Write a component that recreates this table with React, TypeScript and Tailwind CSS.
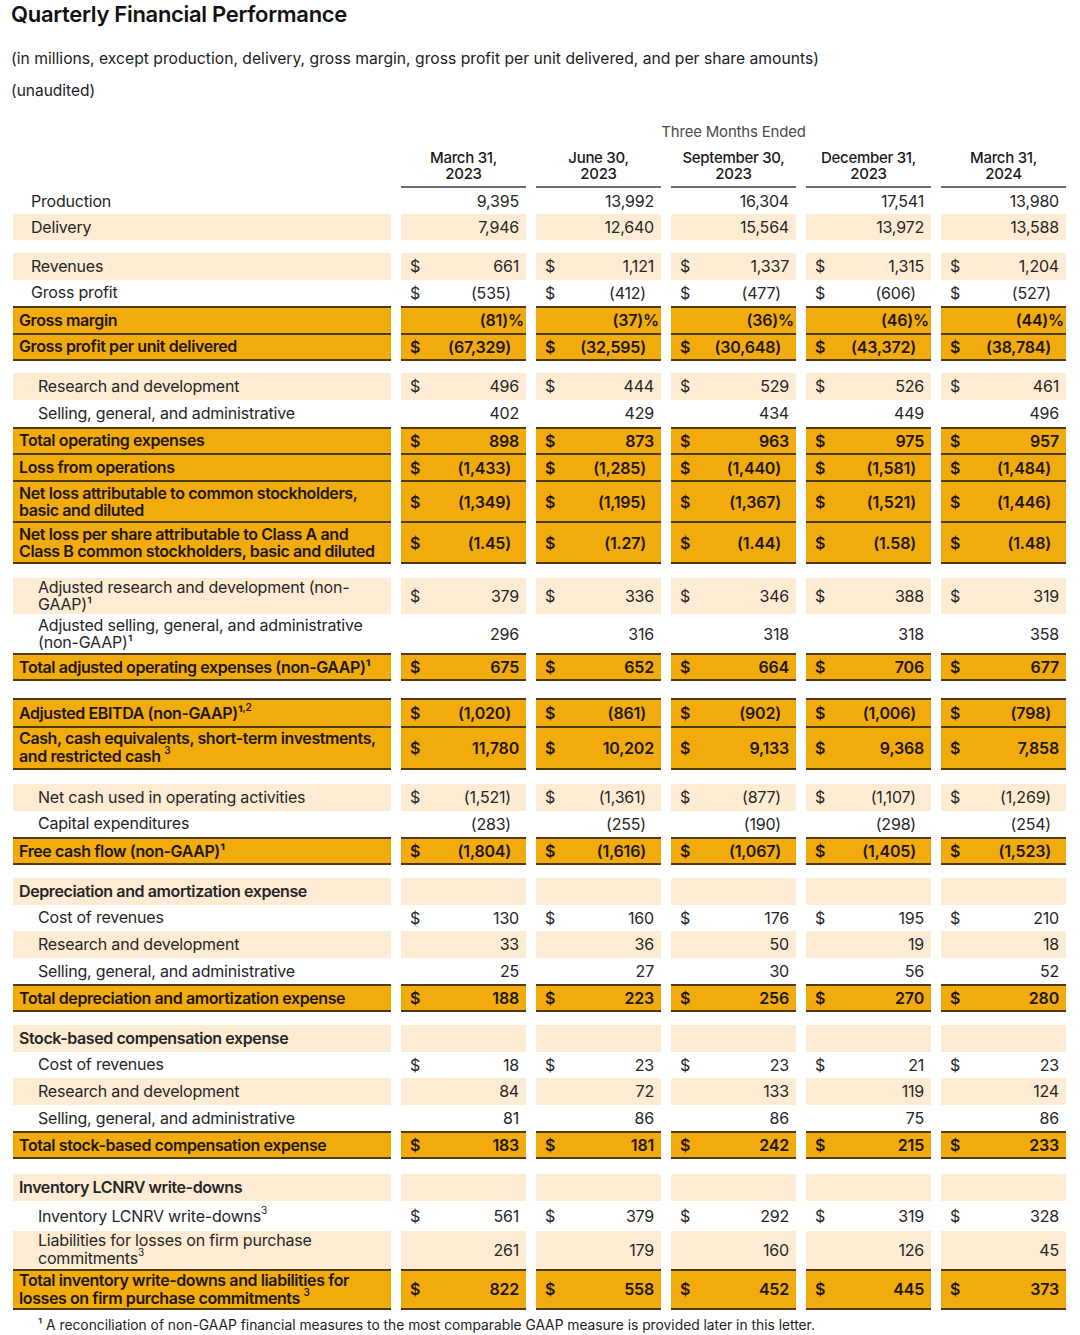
import React from "react";

type Kind = "plain" | "peach" | "total" | "head";
type Row = {
  kind: Kind;
  label: React.ReactNode;
  indent?: number;
  vals?: string[];
  dollar?: boolean;
  h: number;
  mt?: number;
  last?: boolean;
};

const S = ({ c }: { c: string }) => (
  <sup className="relative top-[-2px] text-[10px] leading-none align-super">{c}</sup>
);

const rows: Row[] = [
  { kind: "plain", label: "Production", indent: 18, vals: ["9,395", "13,992", "16,304", "17,541", "13,980"], h: 26 },
  { kind: "peach", label: "Delivery", indent: 18, vals: ["7,946", "12,640", "15,564", "13,972", "13,588"], h: 26 },
  { kind: "peach", label: "Revenues", indent: 18, dollar: true, vals: ["661", "1,121", "1,337", "1,315", "1,204"], h: 26.5, mt: 13 },
  { kind: "plain", label: "Gross profit", indent: 18, dollar: true, vals: ["(535)", "(412)", "(477)", "(606)", "(527)"], h: 26.5 },
  { kind: "total", label: "Gross margin", vals: ["(81)%", "(37)%", "(36)%", "(46)%", "(44)%"], h: 26.5 },
  { kind: "total", label: "Gross profit per unit delivered", dollar: true, vals: ["(67,329)", "(32,595)", "(30,648)", "(43,372)", "(38,784)"], h: 26.5, last: true },
  { kind: "peach", label: "Research and development", indent: 25, dollar: true, vals: ["496", "444", "529", "526", "461"], h: 26.75, mt: 14 },
  { kind: "plain", label: "Selling, general, and administrative", indent: 25, vals: ["402", "429", "434", "449", "496"], h: 26.75 },
  { kind: "total", label: "Total operating expenses", dollar: true, vals: ["898", "873", "963", "975", "957"], h: 26.75 },
  { kind: "total", label: "Loss from operations", dollar: true, vals: ["(1,433)", "(1,285)", "(1,440)", "(1,581)", "(1,484)"], h: 26.75 },
  { kind: "total", label: <>Net loss attributable to common stockholders,<br />basic and diluted</>, dollar: true, vals: ["(1,349)", "(1,195)", "(1,367)", "(1,521)", "(1,446)"], h: 41 },
  { kind: "total", label: <>Net loss per share attributable to Class A and<br />Class B common stockholders, basic and diluted</>, dollar: true, vals: ["(1.45)", "(1.27)", "(1.44)", "(1.58)", "(1.48)"], h: 43, last: true },
  { kind: "peach", label: <>Adjusted research and development (non-<br />GAAP)¹</>, indent: 25, dollar: true, vals: ["379", "336", "346", "388", "319"], h: 36, mt: 14 },
  { kind: "plain", label: <>Adjusted selling, general, and administrative<br />(non-GAAP)¹</>, indent: 25, vals: ["296", "316", "318", "318", "358"], h: 39 },
  { kind: "total", label: "Total adjusted operating expenses (non-GAAP)¹", dollar: true, vals: ["675", "652", "664", "706", "677"], h: 28, last: true },
  { kind: "total", label: <>Adjusted EBITDA (non-GAAP)¹<S c=",2" /></>, dollar: true, vals: ["(1,020)", "(861)", "(902)", "(1,006)", "(798)"], h: 28, mt: 17 },
  { kind: "total", label: <>Cash, cash equivalents, short-term investments,<br />and restricted cash <S c="3" /></>, dollar: true, vals: ["11,780", "10,202", "9,133", "9,368", "7,858"], h: 44, last: true },
  { kind: "peach", label: "Net cash used in operating activities", indent: 25, dollar: true, vals: ["(1,521)", "(1,361)", "(877)", "(1,107)", "(1,269)"], h: 26.5, mt: 14 },
  { kind: "plain", label: "Capital expenditures", indent: 25, vals: ["(283)", "(255)", "(190)", "(298)", "(254)"], h: 26.5 },
  { kind: "total", label: "Free cash flow (non-GAAP)¹", dollar: true, vals: ["(1,804)", "(1,616)", "(1,067)", "(1,405)", "(1,523)"], h: 27, last: true },
  { kind: "head", label: "Depreciation and amortization expense", h: 26.6, mt: 14 },
  { kind: "plain", label: "Cost of revenues", indent: 25, dollar: true, vals: ["130", "160", "176", "195", "210"], h: 26.6 },
  { kind: "peach", label: "Research and development", indent: 25, vals: ["33", "36", "50", "19", "18"], h: 26.6 },
  { kind: "plain", label: "Selling, general, and administrative", indent: 25, vals: ["25", "27", "30", "56", "52"], h: 26.6 },
  { kind: "total", label: "Total depreciation and amortization expense", dollar: true, vals: ["188", "223", "256", "270", "280"], h: 26.6, last: true },
  { kind: "head", label: "Stock-based compensation expense", h: 26.6, mt: 14 },
  { kind: "plain", label: "Cost of revenues", indent: 25, dollar: true, vals: ["18", "23", "23", "21", "23"], h: 26.6 },
  { kind: "peach", label: "Research and development", indent: 25, vals: ["84", "72", "133", "119", "124"], h: 26.6 },
  { kind: "plain", label: "Selling, general, and administrative", indent: 25, vals: ["81", "86", "86", "75", "86"], h: 26.6 },
  { kind: "total", label: "Total stock-based compensation expense", dollar: true, vals: ["183", "181", "242", "215", "233"], h: 26.6, last: true },
  { kind: "head", label: "Inventory LCNRV write-downs", h: 27, mt: 16 },
  { kind: "plain", label: <>Inventory LCNRV write-downs<S c="3" /></>, indent: 25, dollar: true, vals: ["561", "379", "292", "319", "328"], h: 30 },
  { kind: "peach", label: <>Liabilities for losses on firm purchase<br />commitments<S c="3" /></>, indent: 25, vals: ["261", "179", "160", "126", "45"], h: 38 },
  { kind: "total", label: <>Total inventory write-downs and liabilities for<br />losses on firm purchase commitments <S c="3" /></>, dollar: true, vals: ["822", "558", "452", "445", "373"], h: 41, last: true },
];

const headers = [
  ["March 31,", "2023"],
  ["June 30,", "2023"],
  ["September 30,", "2023"],
  ["December 31,", "2023"],
  ["March 31,", "2024"],
];

function cellBg(kind: Kind, last?: boolean) {
  if (kind === "total")
    return "bg-[#f2ab0c] border-t-2 border-[#4d3a12] text-[#1f1705] font-semibold" + (last ? " border-b-2" : "");
  if (kind === "peach" || kind === "head") return "bg-[#fdebd4] text-[#262626]";
  return "text-[#262626]";
}

function padFor(v: string) {
  if (v.endsWith("%")) return "pr-[2px]";
  if (v.endsWith(")")) return "pr-[15px]";
  return "pr-[7px]";
}

export default function App() {
  return (
    <div
      className="w-[1080px] h-[1335px] bg-white overflow-hidden text-[#222]"
      style={{ fontFamily: "Inter, 'Liberation Sans', sans-serif" }}
    >
      <h1 className="pl-[11px] text-[22px] leading-[28px] font-semibold text-[#111] tracking-[-0.3px]">
        Quarterly Financial Performance
      </h1>
      <p className="mt-[21px] pl-[11px] text-[15.7px] leading-[20px]">
        (in millions, except production, delivery, gross margin, gross profit per unit delivered, and per share amounts)
      </p>
      <p className="mt-[12px] pl-[11px] text-[15.5px] leading-[20px]">(unaudited)</p>

      <div className="ml-[13px] w-[1053px]">
        <div className="mt-[21px] flex">
          <div className="w-[388px]" />
          <div className="flex-1 text-center text-[15px] leading-[20px] text-[#4a4a4a] tracking-[-0.2px]">
            Three Months Ended
          </div>
        </div>
        <div className="mt-[8px] grid grid-cols-[378px_125px_125px_125px_125px_125px] gap-x-[10px]">
          <div />
          {headers.map((h, i) => (
            <div
              key={i}
              className="border-b-2 border-[#6b6b6b] pb-[4px] text-center text-[15px] leading-[16px] font-medium text-[#1a1a1a] tracking-[-0.3px]"
            >
              {h[0]}
              <br />
              {h[1]}
            </div>
          ))}
        </div>

        {rows.map((r, ri) => {
          const bg = cellBg(r.kind, r.last);
          const bold = r.kind === "total" || r.kind === "head";
          return (
            <div
              key={ri}
              className="grid grid-cols-[378px_125px_125px_125px_125px_125px] gap-x-[10px] text-[16px] tracking-[-0.2px]"
              style={{ height: r.h, marginTop: r.mt ?? 0 }}
            >
              <div
                className={`${bg} flex items-center leading-[17px] ${bold ? "font-semibold tracking-[-0.4px]" : ""}`}
                style={{ paddingLeft: r.indent ?? 6 }}
              >
                <span>{r.label}</span>
              </div>
              {[0, 1, 2, 3, 4].map((c) => {
                const v = r.vals ? r.vals[c] : "";
                return (
                  <div key={c} className={`${bg} flex items-center justify-between pl-[9px] ${padFor(v)}`}>
                    <span>{r.dollar ? "$" : ""}</span>
                    <span>{v}</span>
                  </div>
                );
              })}
            </div>
          );
        })}
      </div>
      <p className="mt-[7px] pl-[38px] text-[13.8px] leading-[16px] text-[#222]">
        ¹ A reconciliation of non-GAAP financial measures to the most comparable GAAP measure is provided later in this letter.
      </p>
    </div>
  );
}
